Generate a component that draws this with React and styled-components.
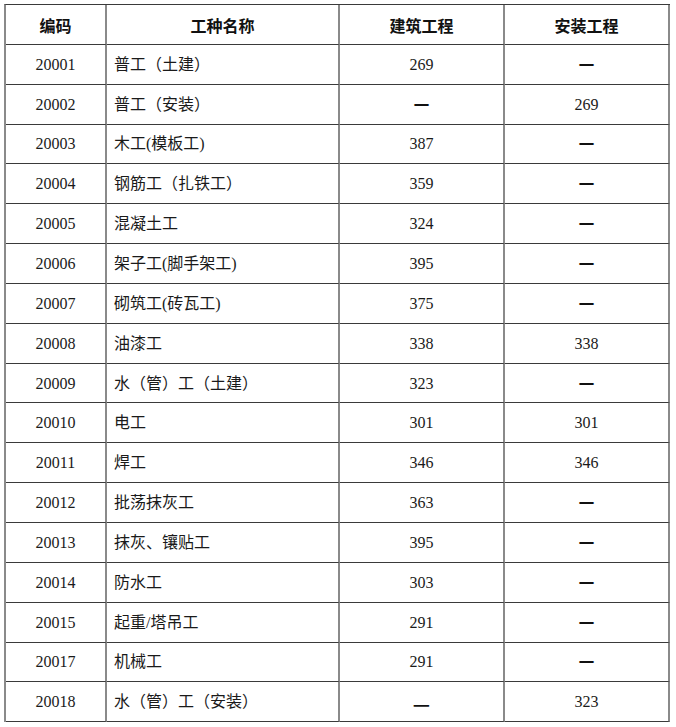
import React from "react";
import styled, { createGlobalStyle } from "styled-components";

const GlobalStyle = createGlobalStyle`
  html, body {
    margin: 0;
    padding: 0;
    background: #ffffff;
  }
`;

const Page = styled.div`
  padding: 4px 0 0 4px;
  font-family: "Liberation Serif", "Noto Sans CJK SC", serif;
  color: #1a1a1a;
`;

const Table = styled.div`
  width: 666px;
  display: flex;
  flex-direction: column;
  border-top: 1px solid #3a3a3a;
  border-left: 2px solid #8a8a8a;
  box-sizing: border-box;
`;

const Row = styled.div`
  display: grid;
  grid-template-columns: 101px 233px 165px 165px;
  height: 39.85px;
`;

const Cell = styled.div`
  display: flex;
  align-items: center;
  justify-content: ${({ $left }) => ($left ? "flex-start" : "center")};
  padding-left: ${({ $left }) => ($left ? "7px" : "0")};
  padding-top: 1px;
  border-right: 2px solid #8a8a8a;
  border-bottom: 1px solid #3a3a3a;
  box-sizing: border-box;
  font-size: 16px;
  line-height: 1;
  white-space: nowrap;
`;

const HeadCell = styled(Cell)`
  font-family: "Noto Sans CJK SC", sans-serif;
  font-weight: 700;
  font-size: 16px;
  color: #111;
`;

const Dash = styled.span`
  font-family: "Noto Sans CJK SC", sans-serif;
  font-weight: 700;
  font-size: ${({ $long }) => ($long ? "19px" : "20px")};
  color: #111;
`;

const rows = [
  ["20001", "普工（土建）", "269", "-"],
  ["20002", "普工（安装）", "-", "269"],
  ["20003", "木工(模板工)", "387", "-"],
  ["20004", "钢筋工（扎铁工）", "359", "-"],
  ["20005", "混凝土工", "324", "-"],
  ["20006", "架子工(脚手架工)", "395", "-"],
  ["20007", "砌筑工(砖瓦工)", "375", "-"],
  ["20008", "油漆工", "338", "338"],
  ["20009", "水（管）工（土建）", "323", "-"],
  ["20010", "电工", "301", "301"],
  ["20011", "焊工", "346", "346"],
  ["20012", "批荡抹灰工", "363", "-"],
  ["20013", "抹灰、镶贴工", "395", "-"],
  ["20014", "防水工", "303", "-"],
  ["20015", "起重/塔吊工", "291", "-"],
  ["20017", "机械工", "291", "-"],
  ["20018", "水（管）工（安装）", "--", "323"],
];

const Value = ({ v }) => {
  if (v === "-") return <Dash>－</Dash>;
  if (v === "--") return <Dash $long>—</Dash>;
  return v;
};

export default function App() {
  return (
    <Page>
      <GlobalStyle />
      <Table>
        <Row>
          <HeadCell>编码</HeadCell>
          <HeadCell>工种名称</HeadCell>
          <HeadCell>建筑工程</HeadCell>
          <HeadCell>安装工程</HeadCell>
        </Row>
        {rows.map(([code, name, build, install]) => (
          <Row key={code}>
            <Cell>{code}</Cell>
            <Cell $left>{name}</Cell>
            <Cell>
              <Value v={build} />
            </Cell>
            <Cell>
              <Value v={install} />
            </Cell>
          </Row>
        ))}
      </Table>
    </Page>
  );
}
